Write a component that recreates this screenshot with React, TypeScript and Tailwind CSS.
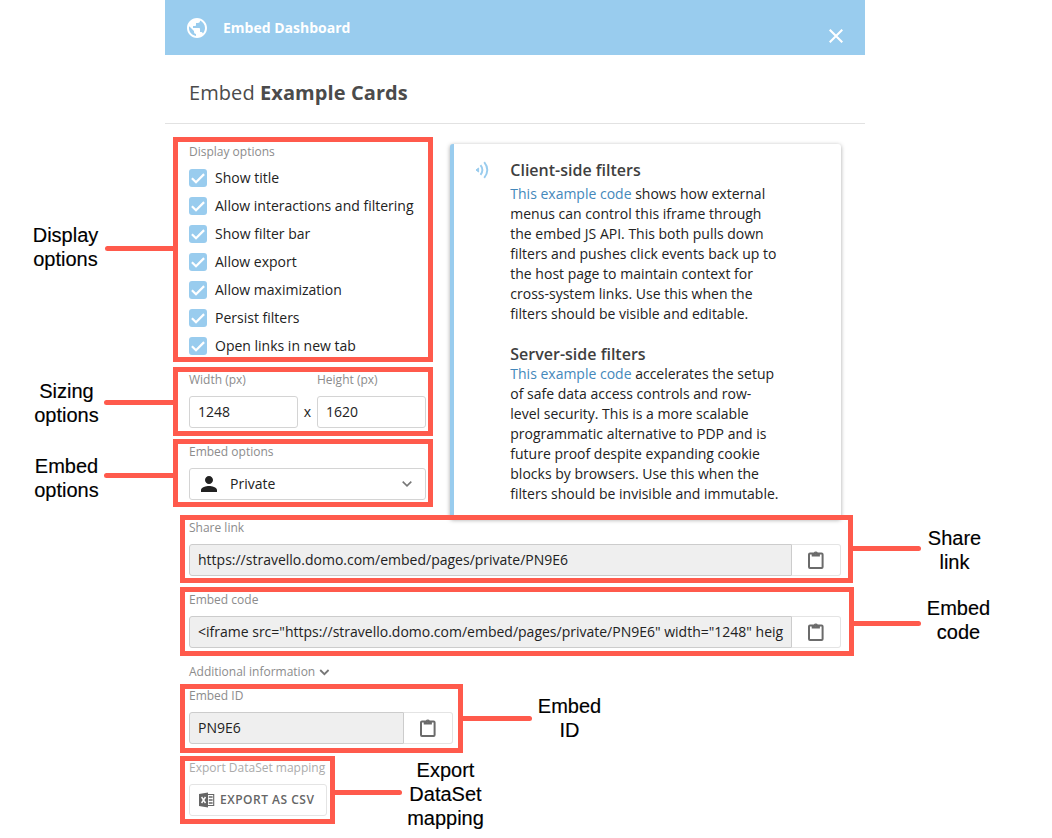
import type { ReactNode } from 'react';

const DISPLAY_OPTIONS = [
  'Show title',
  'Allow interactions and filtering',
  'Show filter bar',
  'Allow export',
  'Allow maximization',
  'Persist filters',
  'Open links in new tab',
];

function FieldLabel({ children, className = 'text-[#8c8c8c]' }: { children: ReactNode; className?: string }) {
  return <div className={`flex h-6 items-center whitespace-nowrap text-xs ${className}`}>{children}</div>;
}

function Checkbox({ label }: { label: string }) {
  return (
    <label className="flex h-7 items-center gap-2 whitespace-nowrap">
      <span className="flex size-[18px] shrink-0 items-center justify-center rounded-[3px] bg-[#99ccee]">
        <svg width="18" height="18" viewBox="0 0 18 18" fill="none" stroke="#fff" strokeWidth="2.2">
          <path d="M2.9 9.2 7 13.2 15.1 5.1" />
        </svg>
      </span>
      {label}
    </label>
  );
}

function ClipboardIcon() {
  return (
    <svg width="16" height="18" viewBox="0 0 16 18">
      <rect x="1" y="2.6" width="13.6" height="14.4" rx="1" fill="none" stroke="#6b6b6b" strokeWidth="2" />
      <path fill="#6b6b6b" fillRule="evenodd" d="M3.7 2h2.1a2.1 2.1 0 0 1 4 0h2.1v3.4H3.7zM7.8 1.7a.8.8 0 1 0 0 1.6.8.8 0 0 0 0-1.6z" />
    </svg>
  );
}

function CopyField({ value }: { value: string }) {
  return (
    <div className="flex h-8 w-full">
      <div className="flex min-w-0 flex-1 items-center rounded-l-[3px] border border-[#cccccc] bg-[#efefef] px-2">
        <span className="whitespace-nowrap">{value}</span>
      </div>
      <button className="flex w-[49px] items-center justify-center rounded-r-[3px] border border-l-0 border-[#e4e4e4] bg-white">
        <ClipboardIcon />
      </button>
    </div>
  );
}

function NumberField({ label, value }: { label: string; value: string }) {
  return (
    <div className="flex flex-1 flex-col gap-1">
      <FieldLabel>{label}</FieldLabel>
      <div className="flex h-8 items-center rounded-[3px] border border-[#d4d4d4] px-2">{value}</div>
    </div>
  );
}

function Frame({ className }: { className: string }) {
  return <div className={`pointer-events-none absolute border-5 border-[#ff5a4c] ${className}`} />;
}

function Lead({ className }: { className: string }) {
  return <div className={`absolute h-[5px] bg-[#ff5a4c] ${className}`} />;
}

function Note({ lines, className }: { lines: string[]; className: string }) {
  return (
    <div
      className={`absolute w-[101px] text-center font-['Liberation_Sans',Arial,sans-serif] text-[20px] leading-6 text-black [-webkit-text-stroke:0.15px_black] ${className}`}
    >
      {lines.map((line) => (
        <div key={line}>{line}</div>
      ))}
    </div>
  );
}

function FilterHelp() {
  return (
    <aside className="flex h-[375px] w-[391px] rounded-[3px] border-l-4 border-[#99ccee] bg-white pl-[21px] shadow-[0_1px_4px_rgba(0,0,0,0.35)]">
      <svg className="mt-[17px] shrink-0" width="16" height="18" viewBox="0 0 16 18" fill="none" stroke="#99ccee" strokeWidth="1.9">
        <path d="M1 9 3.6 7v4z" fill="#99ccee" strokeWidth="1" />
        <path d="M5.5 4.2Q9.3 9 5.5 13.8M9.2 1.2Q15.4 9 9.2 16.8" />
      </svg>
      <div className="pt-4 pl-[19.3px]">
        <h2 className="h-6 text-[16px] leading-[21px] font-semibold text-[#3f3f3f]">Client-side filters</h2>
        <p className="whitespace-nowrap">
          <a className="text-[#4488bb]">This example code</a> shows how external<br />
          menus can control this iframe through<br />
          the embed JS API. This both pulls down<br />
          filters and pushes click events back up to<br />
          the host page to maintain context for<br />
          cross-system links. Use this when the<br />
          filters should be visible and editable.
        </p>
        <h2 className="mt-5 h-5 text-[16px] leading-[21px] font-semibold text-[#3f3f3f]">Server-side filters</h2>
        <p className="whitespace-nowrap">
          <a className="text-[#4488bb]">This example code</a> accelerates the setup<br />
          of safe data access controls and row-<br />
          level security. This is a more scalable<br />
          programmatic alternative to PDP and is<br />
          future proof despite expanding cookie<br />
          blocks by browsers. Use this when the<br />
          filters should be invisible and immutable.
        </p>
      </div>
    </aside>
  );
}

export default function App() {
  return (
    <div className="relative flex h-[838px] w-[1052px] overflow-hidden bg-white pl-[165px] font-['Open_Sans','Noto_Sans',sans-serif] text-[14px] leading-5 text-[#222222]">
      <main className="flex w-[700px] flex-col">
        <header className="flex h-[55px] items-center gap-[14px] bg-[#99ccee] pr-[22px] pl-5 text-white">
          <svg width="24" height="24" viewBox="0 0 24 24" fill="currentColor">
            <path d="M12 2C6.48 2 2 6.48 2 12s4.48 10 10 10 10-4.48 10-10S17.52 2 12 2zm-1 17.93c-3.95-.49-7-3.85-7-7.93 0-.62.08-1.21.21-1.79L9 15v1c0 1.1.9 2 2 2v1.93zm6.9-2.54c-.26-.81-1-1.39-1.9-1.39h-1v-3c0-.55-.45-1-1-1H8v-2h2c.55 0 1-.45 1-1V7h2c1.1 0 2-.9 2-2v-.41c2.93 1.19 5 4.06 5 7.41 0 2.08-.8 3.97-2.1 5.39z" />
          </svg>
          <h1 className="flex-1 text-[14px] font-bold">Embed Dashboard</h1>
          <svg className="mt-[17px]" width="14" height="14" viewBox="0 0 14 14" fill="none" stroke="currentColor" strokeWidth="2.1">
            <path d="m.7.7 12.6 12.6M13.3.7.7 13.3" />
          </svg>
        </header>
        <div className="flex h-[69px] items-center border-b border-[#e2e2e2] px-6 pt-[7px] text-[20px] tracking-[0.08px] text-[#4b4b4b]">
          <span className="whitespace-pre">Embed <b>Example Cards</b></span>
        </div>
        <div className="flex h-[380px] gap-6 px-6 pt-4">
          <section className="flex w-[237px] flex-col">
            <FieldLabel>Display options</FieldLabel>
            {DISPLAY_OPTIONS.map((label) => (
              <Checkbox key={label} label={label} />
            ))}
            <div className="flex items-end pt-2 pb-3">
              <NumberField label="Width (px)" value="1248" />
              <span className="flex h-8 w-[19px] items-center justify-center">x</span>
              <NumberField label="Height (px)" value="1620" />
            </div>
            <div className="flex flex-col gap-1">
              <FieldLabel>Embed options</FieldLabel>
              <div className="flex h-8 shrink-0 items-center gap-[13px] rounded-[3px] border border-[#d4d4d4] pr-[13px] pl-[11px]">
                <svg width="16" height="16" viewBox="4 4 16 16" fill="#222">
                  <path d="M12 12c2.21 0 4-1.79 4-4s-1.79-4-4-4-4 1.79-4 4 1.79 4 4 4zm0 2c-2.67 0-8 1.34-8 4v2h16v-2c0-2.66-5.33-4-8-4z" />
                </svg>
                <span className="flex-1">Private</span>
                <svg width="10" height="6" viewBox="0 0 10 6" fill="none" stroke="#777" strokeWidth="1.6">
                  <path d="m.7.6 4.3 4.2L9.3.6" />
                </svg>
              </div>
            </div>
          </section>
          <div className="pt-1">
            <FilterHelp />
          </div>
        </div>
        <div className="flex flex-col gap-3 px-6 pt-3">
          <div className="flex w-[652px] flex-col gap-1">
            <FieldLabel>Share link</FieldLabel>
            <CopyField value="https://stravello.domo.com/embed/pages/private/PN9E6" />
          </div>
          <div className="flex w-[652px] flex-col gap-1">
            <FieldLabel>Embed code</FieldLabel>
            <CopyField value={'<iframe src="https://stravello.domo.com/embed/pages/private/PN9E6" width="1248" heig'} />
          </div>
          <div className="flex flex-col">
            <FieldLabel className="gap-1 text-[#8c8c8c]">
              Additional information
              <svg width="11" height="7" viewBox="0 0 11 7" fill="none" stroke="#777" strokeWidth="1.8">
                <path d="m1.2 1 4.2 4.2L9.6 1" />
              </svg>
            </FieldLabel>
            <div className="flex w-[264px] flex-col gap-1">
              <FieldLabel>Embed ID</FieldLabel>
              <CopyField value="PN9E6" />
            </div>
          </div>
          <div className="flex flex-col gap-1">
            <FieldLabel className="text-[#ababab]">Export DataSet mapping</FieldLabel>
            <button className="flex h-8 w-[138px] items-center gap-[5px] rounded-[3px] border border-[#e4e4e4] pl-[9px] text-[12px] font-semibold tracking-[0.5px] whitespace-nowrap text-[#666]">
              <svg width="16" height="16" viewBox="0 0 16 16">
                <path fill="#666" d="M0 2 9 .5v15L0 14z" />
                <path fill="none" stroke="#666" strokeWidth="1.1" d="M9 2.5h5.7v11H9" />
                <path stroke="#666" strokeWidth="1.4" d="M9.8 5h3.8M9.8 8h3.8M9.8 11h3.8" />
                <path fill="none" stroke="#fff" strokeWidth="1.4" d="m2.6 5 3.9 6M6.5 5l-3.9 6" />
              </svg>
              EXPORT AS CSV
            </button>
          </div>
        </div>
      </main>

      <Frame className="top-[137px] left-[173px] h-[225px] w-[260px]" />
      <Frame className="top-[367px] left-[173px] h-[69px] w-[260px]" />
      <Frame className="top-[439px] left-[173px] h-[68px] w-[260px]" />
      <Frame className="top-[515px] left-[180px] h-[68px] w-[673px]" />
      <Frame className="top-[587px] left-[180px] h-[69px] w-[674px]" />
      <Frame className="top-[684px] left-[180px] h-[69px] w-[283px]" />
      <Frame className="top-[756px] left-[180px] h-[68px] w-[155px]" />

      <Lead className="top-[246px] left-[105px] w-[68px] rounded-l-full" />
      <Lead className="top-[400px] left-[104px] w-[69px] rounded-l-full" />
      <Lead className="top-[473px] left-[104px] w-[69px] rounded-l-full" />
      <Lead className="top-[546px] left-[853px] w-[68px] rounded-r-full" />
      <Lead className="top-[621px] left-[854px] w-[67px] rounded-r-full" />
      <Lead className="top-[716px] left-[463px] w-[69px] rounded-r-full" />
      <Lead className="top-[790px] left-[335px] w-[67px] rounded-r-full" />

      <Note className="top-[223px] left-[15px]" lines={['Display', 'options']} />
      <Note className="top-[379px] left-[16px]" lines={['Sizing', 'options']} />
      <Note className="top-[454px] left-[16px]" lines={['Embed', 'options']} />
      <Note className="top-[526px] left-[904px]" lines={['Share', 'link']} />
      <Note className="top-[596px] left-[908px]" lines={['Embed', 'code']} />
      <Note className="top-[694px] left-[519px]" lines={['Embed', 'ID']} />
      <Note className="top-[758px] left-[395px]" lines={['Export', 'DataSet', 'mapping']} />
    </div>
  );
}
